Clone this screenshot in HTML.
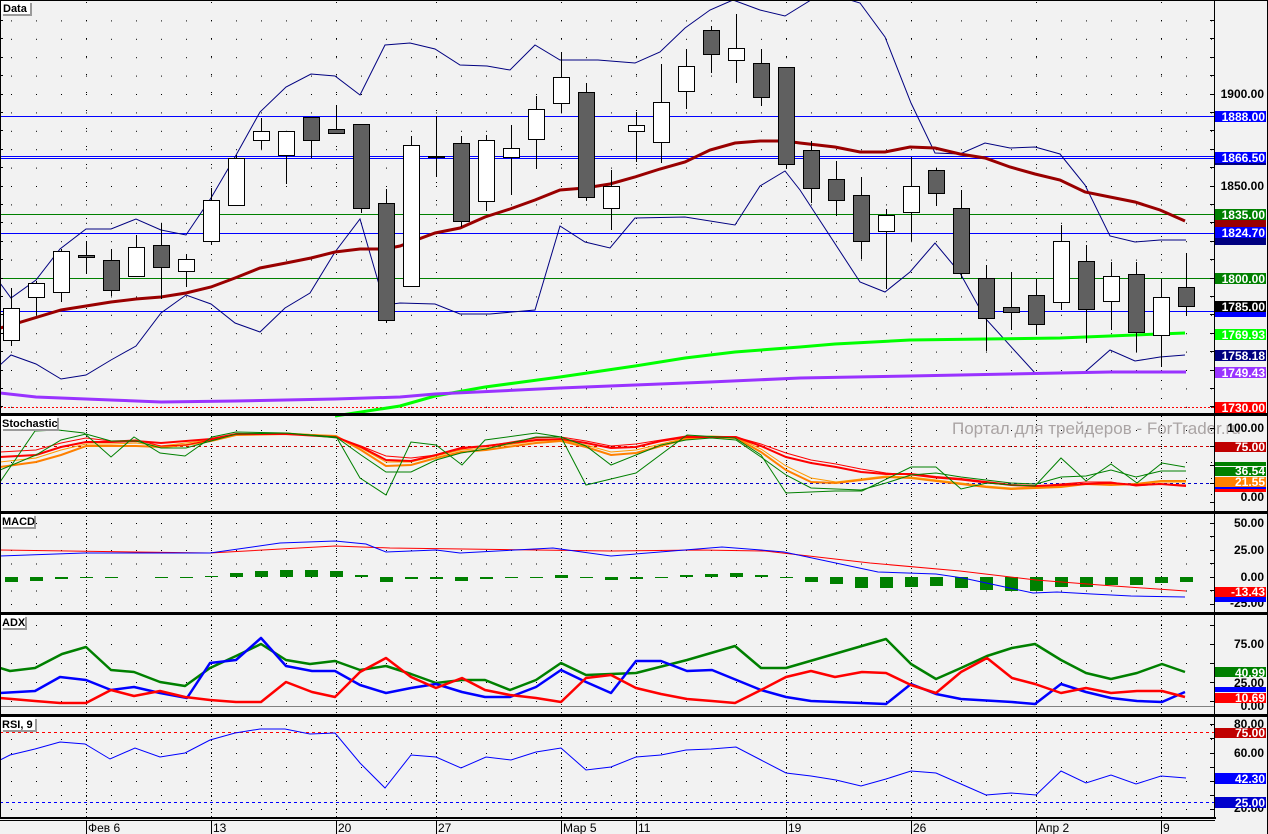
<!DOCTYPE html>
<html><head><meta charset="utf-8"><style>
html,body{margin:0;padding:0;background:#f2f2f2;}
svg{display:block;font-family:"Liberation Sans",sans-serif;}
.ax{font-size:12px;font-weight:bold;text-anchor:end;}
.lb{font-size:12px;font-weight:bold;text-anchor:end;fill:#fff;}
.tt{font-size:11px;font-weight:bold;}
.dt{font-size:12px;}
</style></head><body>
<svg width="1268" height="834" viewBox="0 0 1268 834" xmlns="http://www.w3.org/2000/svg" shape-rendering="crispEdges">
<defs>
<pattern id="dm" x="11" y="20.4" width="25" height="18.4" patternUnits="userSpaceOnUse"><rect width="1" height="1" fill="#000"/></pattern>
<pattern id="dl" x="11" y="430" width="25" height="16" patternUnits="userSpaceOnUse"><rect width="1" height="1" fill="#000"/></pattern>
<pattern id="dl2" x="11" y="523" width="25" height="13.5" patternUnits="userSpaceOnUse"><rect width="1" height="1" fill="#000"/></pattern>
<pattern id="dl3" x="11" y="625" width="25" height="19" patternUnits="userSpaceOnUse"><rect width="1" height="1" fill="#000"/></pattern>
<pattern id="dl4" x="11" y="725" width="25" height="14" patternUnits="userSpaceOnUse"><rect width="1" height="1" fill="#000"/></pattern>
</defs>
<rect width="1268" height="834" fill="#f2f2f2"/>
<rect x="0" y="5" width="1215" height="406" fill="url(#dm)"/>
<rect x="0" y="420" width="1215" height="90" fill="url(#dl)"/>
<rect x="0" y="518" width="1215" height="92" fill="url(#dl2)"/>
<rect x="0" y="620" width="1215" height="92" fill="url(#dl3)"/>
<rect x="0" y="720" width="1215" height="96" fill="url(#dl4)"/>
<g stroke="#000" stroke-width="1" stroke-dasharray="1,3">
<path d="M86.5 416V817M211.5 416V817M336.5 416V817M436.5 416V817M561.5 416V817M636.5 416V817M786.5 416V817M911.5 416V817M1036.5 416V817M1161.5 416V817"/>
</g>
<g stroke="#000" stroke-width="1" stroke-dasharray="1,17">
<path d="M86.5 2V412M211.5 2V412M336.5 2V412M436.5 2V412M561.5 2V412M636.5 2V412M786.5 2V412M911.5 2V412M1036.5 2V412M1161.5 2V412"/>
</g>

<g stroke-width="1" fill="none">
<path d="M0 116.5H1215M0 156.5H1215M0 158.5H1215M0 233.5H1215M0 311.5H1215" stroke="#0000ff"/>
<path d="M0 214.5H1215M0 278.5H1215" stroke="#008000"/>
<path d="M0 407.5H1215" stroke="#ff0000" stroke-dasharray="2,2"/>
</g>
<g fill="none" shape-rendering="auto">
<polyline stroke="#000080" stroke-width="1" points="0,283 11,298 36,280 60,249 86,229 111,229 136,219 161,230 186,235 211,198 235,157 260,112 286,87 311,74 335,76 360,95 385,45 410,43 435,49 460,65 487,66 510,70 535,45 560,60 598,60 635,63 660,52 685,28 710,10 733,0 760,10 785,16 811,0 850,0 860,3 885,37 911,103 935,153 960,154 985,143 1010,148 1035,147 1060,154 1085,185 1110,236 1135,242 1160,240 1186,240"/>
<polyline stroke="#000080" stroke-width="1" points="0,365 11,355 36,364 61,379 86,375 111,360 136,346 161,313 186,295 211,304 235,323 260,332 285,308 310,293 335,252 360,219 385,305 400,303 435,304 460,314 490,314 535,310 560,226 585,242 610,248 635,218 685,217 735,225 760,186 785,171 800,190 860,282 885,292 910,272 935,243 960,273 985,318 1035,373 1085,372 1110,350 1135,361 1160,357 1185,355"/>
<polyline stroke="#990000" stroke-width="3" points="0,328 11,325 61,310 86,306 111,302 136,299 161,297 186,293 211,287 235,278 260,268 286,263 311,258 335,252 360,249 385,249 400,246 435,233 460,228 485,217 510,209 535,200 560,190 585,188 610,184 635,177 660,169 685,162 710,150 735,143 760,141 785,141 800,143 835,147 860,152 885,152 910,147 935,148 960,154 985,158 1010,167 1035,174 1060,180 1085,192 1110,197 1135,202 1160,210 1185,221"/>
<polyline stroke="#00ff00" stroke-width="3" points="335,416 400,406 435,396 485,387 560,377 635,366 685,358 735,352 800,347 835,344 910,340 985,339 1060,338 1185,333"/>
<polyline stroke="#9933ff" stroke-width="3" points="0,393 36,397 86,399 111,400 161,402 235,401 335,399 400,397 435,394 560,388 635,385 710,382 800,378 910,376 1010,374 1110,372 1186,372"/>
</g>

<g stroke="#000" stroke-width="1">
<path d="M11.5 288V346M36.5 281V315M61.5 249V302M86.5 241V274M111.5 249V296M136.5 235V276M161.5 223V299M186.5 254V287M211.5 188V245M236.5 155V205M261.5 118V149M286.5 131V184M311.5 117V158M336.5 105V133M361.5 124V213M386.5 189V323M411.5 136V286M436.5 116V177M461.5 136V227M486.5 135V211M511.5 125V195M536.5 96V169M561.5 52V113M586.5 83V201M611.5 170V230M636.5 112V162M661.5 64V163M686.5 49V109M711.5 26V73M736.5 14V83M761.5 49V106M786.5 67V169M811.5 141V203M836.5 161V216M861.5 177V259M886.5 209V289M911.5 157V241M936.5 168V206M961.5 190V278M986.5 265V351M1011.5 272V330M1036.5 279V335M1061.5 225V310M1086.5 245V343M1111.5 262V330M1136.5 262V352M1161.5 279V367M1186.5 253V316"/>
<g fill="#fff">
<rect x="3.5" y="308.5" width="16" height="32"/>
<rect x="28.5" y="283.5" width="16" height="14"/>
<rect x="53.5" y="251.5" width="16" height="41"/>
<rect x="128.5" y="247.5" width="16" height="29"/>
<rect x="178.5" y="259.5" width="16" height="12"/>
<rect x="203.5" y="200.5" width="16" height="41"/>
<rect x="228.5" y="158.5" width="16" height="47"/>
<rect x="253.5" y="131.5" width="16" height="9"/>
<rect x="278.5" y="131.5" width="16" height="24"/>
<rect x="403.5" y="145.5" width="16" height="141"/>
<rect x="478.5" y="140.5" width="16" height="61"/>
<rect x="503.5" y="148.5" width="16" height="9"/>
<rect x="528.5" y="109.5" width="16" height="30"/>
<rect x="553.5" y="77.5" width="16" height="26"/>
<rect x="603.5" y="186.5" width="16" height="22"/>
<rect x="628.5" y="125.5" width="16" height="6"/>
<rect x="653.5" y="102.5" width="16" height="40"/>
<rect x="678.5" y="66.5" width="16" height="25"/>
<rect x="728.5" y="48.5" width="16" height="12"/>
<rect x="878.5" y="215.5" width="16" height="16"/>
<rect x="903.5" y="186.5" width="16" height="26"/>
<rect x="1053.5" y="241.5" width="16" height="61"/>
<rect x="1103.5" y="276.5" width="16" height="25"/>
<rect x="1153.5" y="297.5" width="16" height="38"/>
</g>
<g fill="#606060">
<rect x="78.5" y="255.5" width="16" height="2"/>
<rect x="103.5" y="260.5" width="16" height="30"/>
<rect x="153.5" y="245.5" width="16" height="22"/>
<rect x="303.5" y="117.5" width="16" height="23"/>
<rect x="328.5" y="129.5" width="16" height="4"/>
<rect x="353.5" y="124.5" width="16" height="84"/>
<rect x="378.5" y="203.5" width="16" height="117"/>
<rect x="428.5" y="156.5" width="16" height="1"/>
<rect x="453.5" y="143.5" width="16" height="78"/>
<rect x="578.5" y="92.5" width="16" height="105"/>
<rect x="703.5" y="30.5" width="16" height="24"/>
<rect x="753.5" y="63.5" width="16" height="34"/>
<rect x="778.5" y="67.5" width="16" height="97"/>
<rect x="803.5" y="150.5" width="16" height="38"/>
<rect x="828.5" y="179.5" width="16" height="21"/>
<rect x="853.5" y="195.5" width="16" height="46"/>
<rect x="928.5" y="170.5" width="16" height="23"/>
<rect x="953.5" y="208.5" width="16" height="65"/>
<rect x="978.5" y="278.5" width="16" height="40"/>
<rect x="1003.5" y="307.5" width="16" height="5"/>
<rect x="1028.5" y="295.5" width="16" height="29"/>
<rect x="1078.5" y="261.5" width="16" height="48"/>
<rect x="1128.5" y="274.5" width="16" height="58"/>
<rect x="1178.5" y="287.5" width="16" height="19"/>
</g>
</g>

<g fill="none" stroke-width="1">
<path d="M0 446.5H1215" stroke="#cc0000" stroke-dasharray="3,3"/>
<path d="M0 483.5H1215" stroke="#0000cc" stroke-dasharray="3,3"/>
</g>
<text x="952" y="434" font-size="17" fill="#aaa4a4" font-family="Liberation Sans, sans-serif">Портал для трейдеров - ForTrader.ru</text>
<g fill="none" shape-rendering="auto">
<polyline stroke="#ff8000" stroke-width="2" points="0,467 36,462 61,455 86,446 111,446 136,446 161,447 186,445 211,441 236,435 286,434 336,436 361,450 386,466 411,465 436,458 461,452 486,450 536,443 561,441 586,447 611,455 636,453 661,446 686,439 711,437 736,438 761,452 786,470 811,482 836,483 861,480 886,477 911,478 936,481 961,484 986,487 1011,489 1036,488 1061,487 1086,484 1111,485 1136,484 1161,481 1186,481"/>
<polyline stroke="#ff9900" stroke-width="1" points="0,462 36,458 61,450 86,444 111,444 136,443 161,446 186,443 211,440 236,434 286,433 336,436 361,448 386,462 411,462 436,456 461,450 486,448 536,441 561,440 586,445 611,452 636,450 661,444 686,438 711,436 736,437 761,449 786,466 811,478 836,482 861,479 886,476 911,477 936,480 961,483 986,486 1011,488 1036,487 1061,486 1086,484 1111,484 1136,484 1161,482 1186,482"/>
<polyline stroke="#ff0000" stroke-width="2" points="0,457 36,455 61,447 86,442 111,442 136,441 161,443 186,441 211,439 236,434 286,434 336,437 361,447 386,460 411,461 436,455 461,448 486,446 536,440 561,439 586,443 611,448 636,447 661,441 686,437 711,437 736,437 761,446 786,457 811,463 836,467 861,472 886,474 911,474 936,477 961,479 986,482 1011,485 1036,486 1061,485 1086,484 1111,483 1136,485 1161,484 1186,486"/>
<polyline stroke="#ff0000" stroke-width="1" points="0,452 36,450 61,443 86,438 111,441 136,440 161,446 186,445 211,440 236,434 286,434 336,437 361,446 386,456 411,458 436,455 461,449 486,446 536,438 561,437 586,441 611,446 636,444 661,440 686,436 711,437 736,437 761,444 786,453 811,460 836,464 861,469 886,473 911,475 936,478 961,480 986,483 1011,485 1036,486 1061,484 1086,482 1111,482 1136,486 1161,484 1186,485"/>
<polyline stroke="#008000" stroke-width="1" points="0,470 36,455 61,440 86,434 111,441 136,441 161,448 186,448 211,441 236,434 286,433 336,437 361,455 386,472 411,472 436,460 461,453 486,449 536,437 561,437 586,446 611,465 636,455 661,445 686,440 711,438 736,440 761,457 786,475 811,488 861,490 886,483 911,475 936,473 961,477 986,480 1011,483 1036,484 1061,477 1086,476 1111,470 1136,477 1161,471 1186,471"/>
<polyline stroke="#008000" stroke-width="1" points="0,482 35,431 58,430 84,433 111,457 134,437 160,453 185,456 212,437 236,432 286,433 337,438 360,478 386,495 411,442 436,445 462,465 485,440 536,433 561,437 586,485 611,479 636,473 687,435 735,438 761,455 786,493 835,491 862,491 911,467 936,467 961,489 987,483 1012,485 1035,486 1061,458 1086,481 1111,464 1137,483 1162,463 1185,467"/>
</g>

<g fill="#008000">
<rect x="5" y="577" width="13" height="5"/><rect x="30" y="577" width="13" height="4"/>
<rect x="55" y="577" width="13" height="2"/><rect x="80" y="577" width="13" height="1"/><rect x="105" y="577" width="13" height="1"/>
<rect x="155" y="577" width="13" height="1"/><rect x="180" y="577" width="13" height="1"/><rect x="205" y="576" width="13" height="1"/>
<rect x="230" y="573" width="13" height="4"/><rect x="255" y="571" width="13" height="6"/><rect x="280" y="570" width="13" height="7"/>
<rect x="305" y="570" width="13" height="7"/><rect x="330" y="571" width="13" height="6"/><rect x="355" y="575" width="13" height="2"/>
<rect x="380" y="577" width="13" height="5"/><rect x="405" y="577" width="13" height="2"/><rect x="430" y="577" width="13" height="2"/>
<rect x="455" y="577" width="13" height="4"/><rect x="480" y="577" width="13" height="2"/><rect x="505" y="577" width="13" height="1"/>
<rect x="530" y="577" width="13" height="1"/><rect x="555" y="575" width="13" height="3"/><rect x="580" y="577" width="13" height="1"/>
<rect x="605" y="577" width="13" height="3"/><rect x="630" y="577" width="13" height="2"/><rect x="655" y="577" width="13" height="1"/>
<rect x="680" y="575" width="13" height="2"/><rect x="705" y="574" width="13" height="3"/><rect x="730" y="573" width="13" height="4"/>
<rect x="755" y="575" width="13" height="2"/><rect x="780" y="577" width="13" height="1"/><rect x="805" y="577" width="13" height="5"/>
<rect x="830" y="577" width="13" height="7"/><rect x="855" y="577" width="13" height="11"/><rect x="880" y="577" width="13" height="11"/>
<rect x="905" y="577" width="13" height="10"/><rect x="930" y="577" width="13" height="9"/><rect x="955" y="577" width="13" height="11"/>
<rect x="980" y="577" width="13" height="13"/><rect x="1005" y="577" width="13" height="14"/><rect x="1030" y="577" width="13" height="14"/>
<rect x="1055" y="577" width="13" height="10"/><rect x="1080" y="577" width="13" height="10"/><rect x="1105" y="577" width="13" height="8"/>
<rect x="1130" y="577" width="13" height="8"/><rect x="1155" y="577" width="13" height="6"/><rect x="1180" y="577" width="13" height="5"/>
</g>
<g fill="none" stroke-width="1" shape-rendering="auto">
<polyline stroke="#ff0000" points="0,550 210,553 335,546 390,548 611,551 700,550 765,551 800,555 870,563 960,571 1036,580 1100,585 1186,591"/>
<polyline stroke="#0000ff" points="0,556 84,553 210,553 280,543 335,541 366,544 386,552 436,550 460,553 553,548 611,556 722,547 761,550 784,552 878,572 936,574 963,578 1033,593 1057,592 1092,594 1131,596 1185,597"/>
</g>

<path d="M0 706.5H1215" stroke="#808080" stroke-width="1"/>
<g fill="none" stroke-width="2.5" shape-rendering="auto" stroke-linejoin="round">
<polyline stroke="#008000" points="0,668 10,671 35,668 62,654 86,647 111,670 134,672 160,682 185,686 210,668 236,656 261,644 286,660 310,664 335,661 360,670 386,666 411,674 436,683 462,680 485,680 510,690 536,680 561,663 586,675 611,674 636,673 687,660 735,646 761,668 786,668 886,639 911,664 936,679 961,668 987,656 1012,648 1035,644 1061,660 1086,673 1111,679 1137,673 1162,664 1185,672"/>
<polyline stroke="#0000ff" points="0,693 35,691 60,677 86,680 111,690 134,687 160,693 187,698 210,663 236,660 261,638 286,666 312,671 335,671 360,685 386,693 411,688 436,684 462,692 485,697 510,697 536,687 561,670 586,682 611,693 636,661 661,661 687,671 712,670 761,690 786,697 811,701 886,704 911,684 936,694 961,699 1012,702 1035,704 1061,684 1086,692 1111,698 1137,701 1162,702 1185,692"/>
<polyline stroke="#ff0000" points="0,698 35,701 60,703 86,703 111,690 134,696 160,691 185,697 210,700 236,702 261,702 286,682 312,692 335,697 360,672 386,658 411,677 436,688 462,678 485,690 510,695 536,698 561,702 586,678 611,675 636,688 661,694 687,699 712,701 735,703 761,690 786,677 811,671 835,677 862,672 886,673 911,685 936,693 961,672 987,658 1012,678 1035,684 1061,693 1086,688 1111,693 1137,691 1162,691 1185,697"/>
</g>

<g fill="none" stroke-width="1">
<path d="M0 732.5H1215" stroke="#ff0000" stroke-dasharray="3,3"/>
<path d="M0 802.5H1215" stroke="#0000ff" stroke-dasharray="3,3"/>
</g>
<polyline fill="none" stroke="#0000ff" stroke-width="1" shape-rendering="auto" points="0,760 10,755 35,749 60,742 85,744 110,759 135,748 160,757 185,753 210,740 235,733 260,729 285,729 310,734 335,733 360,763 385,788 411,755 436,757 461,768 486,757 511,760 536,752 561,748 586,770 611,767 636,757 661,755 686,750 711,749 736,747 761,760 786,773 811,776 836,780 861,786 886,779 911,771 936,773 961,784 986,795 1011,793 1036,795 1061,771 1086,783 1111,775 1136,784 1161,776 1186,778"/>

<g fill="#000">
<rect x="0" y="0" width="1268" height="1"/>
<rect x="0" y="413" width="1268" height="3"/>
<rect x="0" y="511" width="1268" height="3"/>
<rect x="0" y="612" width="1268" height="3"/>
<rect x="0" y="714" width="1268" height="3"/>
<rect x="0" y="817" width="1216" height="2"/>
<rect x="0" y="0" width="1" height="819"/>
<rect x="1214" y="0" width="1" height="819"/>
<rect x="1267" y="0" width="1" height="834"/>
</g>
<path stroke="#000" stroke-width="1" d="M1210 20.5H1215M1210 38.5H1215M1210 57.5H1215M1210 75.5H1215M1210 94.5H1215M1210 112.5H1215M1210 130.5H1215M1210 149.5H1215M1210 167.5H1215M1210 186.5H1215M1210 204.5H1215M1210 222.5H1215M1210 241.5H1215M1210 259.5H1215M1210 278.5H1215M1210 296.5H1215M1210 314.5H1215M1210 333.5H1215M1210 351.5H1215M1210 370.5H1215M1210 388.5H1215M1210 406.5H1215M1 20.5H3M1 38.5H3M1 57.5H3M1 75.5H3M1 94.5H3M1 112.5H3M1 130.5H3M1 149.5H3M1 167.5H3M1 186.5H3M1 204.5H3M1 222.5H3M1 241.5H3M1 259.5H3M1 278.5H3M1 296.5H3M1 314.5H3M1 333.5H3M1 351.5H3M1 370.5H3M1 388.5H3M1 406.5H3
M1210 428.5H1215M1210 446.5H1215M1210 465.5H1215M1210 483.5H1215M1210 502.5H1215M1210 523.5H1215M1210 536.5H1215M1210 550.5H1215M1210 563.5H1215M1210 577.5H1215M1210 590.5H1215M1210 604.5H1215M1210 625.5H1215M1210 644.5H1215M1210 663.5H1215M1210 682.5H1215M1210 701.5H1215M1210 724.5H1215M1210 738.5H1215M1210 753.5H1215M1210 767.5H1215M1210 781.5H1215M1210 795.5H1215M1210 809.5H1215"/>

<g class="ax">
<text x="1264" y="98">1900.00</text>
<text x="1264" y="190">1850.00</text>
<text x="1264" y="432">100.00</text>
<text x="1264" y="501">0.00</text>
<text x="1264" y="527">50.00</text>
<text x="1264" y="554">25.00</text>
<text x="1264" y="581">0.00</text>
<text x="1264" y="607">-25.00</text>
<text x="1264" y="648">75.00</text>
<text x="1264" y="687">25.00</text>
<text x="1264" y="710">0.00</text>
<text x="1264" y="728">80.00</text>
<text x="1264" y="757">60.00</text>
<text x="1264" y="812">20.00</text>
</g>

<g>
<rect x="1215" y="111" width="51" height="11" fill="#0000ff"/>
<rect x="1215" y="152" width="51" height="11" fill="#0000ff"/>
<rect x="1215" y="163" width="51" height="2" fill="#000080"/>
<rect x="1215" y="209" width="51" height="11" fill="#008000"/>
<rect x="1215" y="220" width="51" height="7" fill="#990000"/>
<rect x="1215" y="227" width="51" height="11" fill="#0000ff"/>
<rect x="1215" y="238" width="51" height="7" fill="#000080"/>
<rect x="1215" y="273" width="51" height="11" fill="#008000"/>
<rect x="1215" y="301" width="51" height="11" fill="#000000"/>
<rect x="1215" y="312" width="51" height="5" fill="#0000ff"/>
<rect x="1215" y="329" width="51" height="11" fill="#00ff00"/>
<rect x="1215" y="350" width="51" height="11" fill="#000080"/>
<rect x="1215" y="367" width="51" height="11" fill="#9933ff"/>
<rect x="1215" y="402" width="51" height="11" fill="#ff0000"/>
<rect x="1215" y="442" width="51" height="10" fill="#c00000"/>
<rect x="1215" y="462" width="51" height="4" fill="#008000"/>
<rect x="1215" y="467" width="51" height="9" fill="#008000"/>
<rect x="1215" y="477" width="51" height="10" fill="#ff8000"/>
<rect x="1215" y="487" width="51" height="2" fill="#0000ff"/>
<rect x="1215" y="489" width="51" height="3" fill="#ff0000"/>
<rect x="1215" y="587" width="51" height="10" fill="#ff0000"/>
<rect x="1215" y="597" width="51" height="5" fill="#0000ff"/>
<rect x="1215" y="667" width="51" height="10" fill="#008000"/>
<rect x="1215" y="687" width="51" height="5" fill="#0000ff"/>
<rect x="1215" y="693" width="51" height="10" fill="#ff0000"/>
<rect x="1215" y="728" width="51" height="10" fill="#c00000"/>
<rect x="1215" y="773" width="51" height="11" fill="#0000ff"/>
<rect x="1215" y="797" width="51" height="11" fill="#0000cc"/>
</g>
<g class="lb">
<text x="1265" y="121">1888.00</text>
<text x="1265" y="162">1866.50</text>
<text x="1265" y="219">1835.00</text>
<text x="1265" y="237">1824.70</text>
<text x="1265" y="283">1800.00</text>
<text x="1265" y="311">1785.00</text>
<text x="1265" y="339">1769.93</text>
<text x="1265" y="360">1758.18</text>
<text x="1265" y="377">1749.43</text>
<text x="1265" y="412">1730.00</text>
<text x="1265" y="451">75.00</text>
<text x="1265" y="475">36.54</text>
<text x="1265" y="486">21.55</text>
<text x="1265" y="596">-13.43</text>
<text x="1265" y="677">40.99</text>
<text x="1265" y="702">10.69</text>
<text x="1265" y="737">75.00</text>
<text x="1265" y="783">42.30</text>
<text x="1265" y="807">25.00</text>
</g>

<g>
<rect x="3" y="3" width="29" height="13" fill="#9a9a9a"/><rect x="1" y="1" width="29" height="13" fill="#fff"/><text class="tt" x="3" y="12">Data</text>
<rect x="3" y="418" width="56" height="13" fill="#9a9a9a"/><rect x="1" y="416" width="56" height="13" fill="#fff"/><text class="tt" x="2" y="427">Stochastic</text>
<rect x="3" y="516" width="33" height="13" fill="#9a9a9a"/><rect x="1" y="514" width="33" height="13" fill="#fff"/><text class="tt" x="2" y="525">MACD</text>
<rect x="3" y="617" width="24" height="13" fill="#9a9a9a"/><rect x="1" y="615" width="24" height="13" fill="#fff"/><text class="tt" x="2" y="626">ADX</text>
<rect x="3" y="719" width="34" height="13" fill="#9a9a9a"/><rect x="1" y="717" width="34" height="13" fill="#fff"/><text class="tt" x="2" y="728">RSI, 9</text>
</g>

<path stroke="#000" stroke-width="1" d="M0 820.5H1215M86.5 820V834M211.5 820V834M336.5 820V834M436.5 820V834M561.5 820V834M636.5 820V834M786.5 820V834M911.5 820V834M1036.5 820V834M1161.5 820V834"/>
<g class="dt">
<text x="88" y="832">Фев 6</text>
<text x="213" y="832">13</text>
<text x="338" y="832">20</text>
<text x="438" y="832">27</text>
<text x="563" y="832">Мар 5</text>
<text x="638" y="832">11</text>
<text x="788" y="832">19</text>
<text x="913" y="832">26</text>
<text x="1038" y="832">Апр 2</text>
<text x="1163" y="832">9</text>
</g>
</svg>
</body></html>
